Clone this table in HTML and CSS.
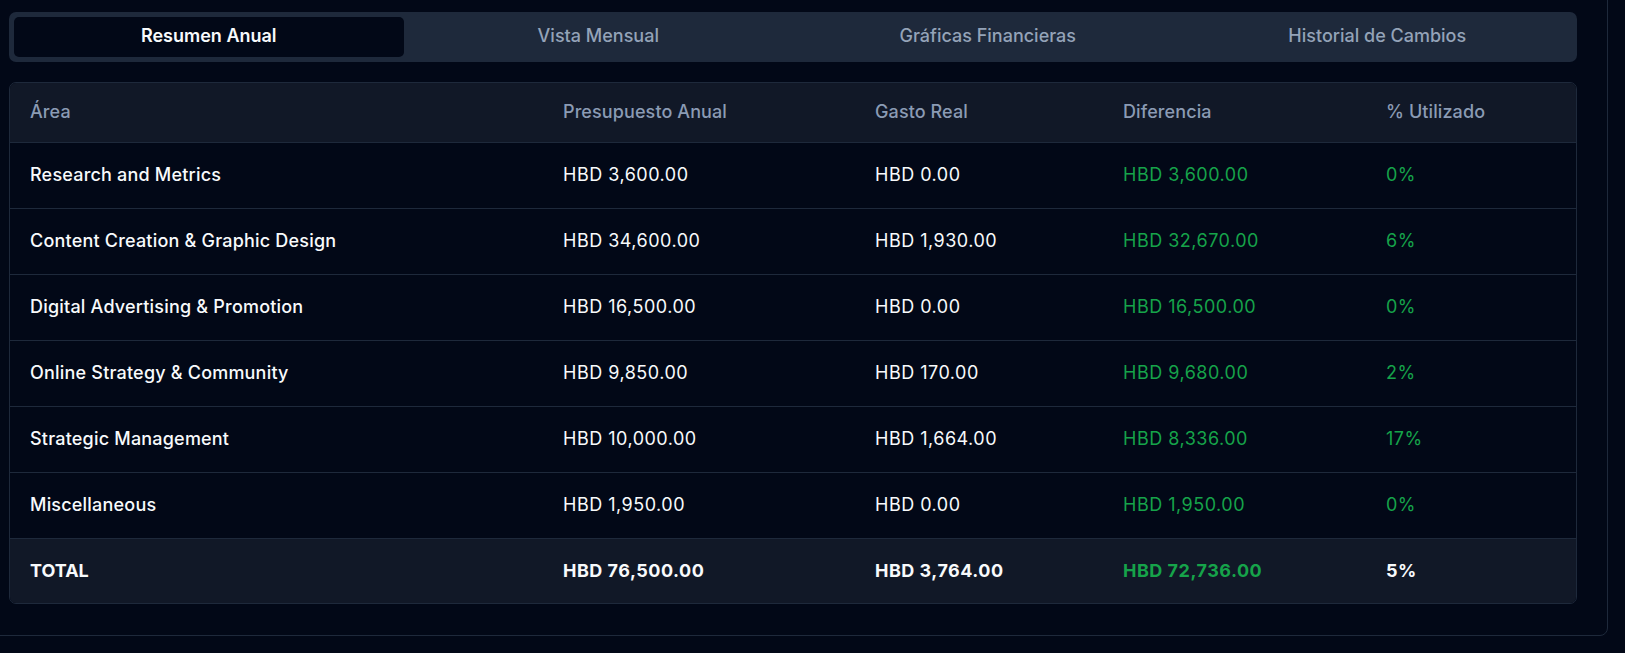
FILE: index.html
```html
<!DOCTYPE html>
<html lang="es">
<head>
<meta charset="utf-8">
<title>Resumen Anual</title>
<link rel="stylesheet" href="styles.css">
</head>
<body>
<div class="panel">
  <div class="tabs">
    <button class="tab active">Resumen Anual</button>
    <button class="tab">Vista Mensual</button>
    <button class="tab">Gráficas Financieras</button>
    <button class="tab">Historial de Cambios</button>
  </div>
  <div class="table-card">
    <table class="budget">
      <colgroup>
        <col class="c1"><col class="c2"><col class="c3"><col class="c4"><col class="c5">
      </colgroup>
      <thead>
        <tr><th>Área</th><th>Presupuesto Anual</th><th>Gasto Real</th><th>Diferencia</th><th>% Utilizado</th></tr>
      </thead>
      <tbody>
        <tr><td class="area">Research and Metrics</td><td class="num">HBD 3,600.00</td><td class="num">HBD 0.00</td><td class="num pos">HBD 3,600.00</td><td class="num pos">0%</td></tr>
        <tr><td class="area">Content Creation &amp; Graphic Design</td><td class="num">HBD 34,600.00</td><td class="num">HBD 1,930.00</td><td class="num pos">HBD 32,670.00</td><td class="num pos">6%</td></tr>
        <tr><td class="area">Digital Advertising &amp; Promotion</td><td class="num">HBD 16,500.00</td><td class="num">HBD 0.00</td><td class="num pos">HBD 16,500.00</td><td class="num pos">0%</td></tr>
        <tr><td class="area">Online Strategy &amp; Community</td><td class="num">HBD 9,850.00</td><td class="num">HBD 170.00</td><td class="num pos">HBD 9,680.00</td><td class="num pos">2%</td></tr>
        <tr><td class="area">Strategic Management</td><td class="num">HBD 10,000.00</td><td class="num">HBD 1,664.00</td><td class="num pos">HBD 8,336.00</td><td class="num pos">17%</td></tr>
        <tr><td class="area">Miscellaneous</td><td class="num">HBD 1,950.00</td><td class="num">HBD 0.00</td><td class="num pos">HBD 1,950.00</td><td class="num pos">0%</td></tr>
      </tbody>
      <tfoot>
        <tr><td>TOTAL</td><td class="num">HBD 76,500.00</td><td class="num">HBD 3,764.00</td><td class="num pos">HBD 72,736.00</td><td class="num">5%</td></tr>
      </tfoot>
    </table>
  </div>
</div>
</body>
</html>
```
FILE: styles.css
```css
* { box-sizing: border-box; }
html, body {
  margin: 0;
  padding: 0;
  background: #020817;
  overflow: hidden;
}
body {
  font-family: "Inter", "Noto Sans", sans-serif;
  color: #f8fafc;
  width: 1625px;
  height: 653px;
}
.panel {
  margin: -19px 0 0 -21px;
  width: 1629px;
  border: 1px solid #1e293b;
  border-radius: 8px;
  padding: 30px 30px 31px 29px;
  background: #020817;
}
.tabs {
  display: grid;
  grid-template-columns: repeat(4, 1fr);
  background: #1e293b;
  border-radius: 7px;
  padding: 5px;
  height: 50px;
}
.tab {
  border: 0;
  background: transparent;
  font-family: inherit;
  font-size: 18px;
  font-weight: 500;
  color: #94a3b8;
  border-radius: 5px;
  height: 40px;
  padding: 0 0 3px;
  cursor: pointer;
}
.tab.active {
  background: #020817;
  color: #f8fafc;
  font-weight: 600;
}
.table-card {
  margin-top: 20px;
  border: 1px solid #1e293b;
  border-radius: 7px;
  overflow: hidden;
}
.budget {
  width: 100%;
  border-collapse: collapse;
  table-layout: fixed;
  font-size: 18px;
}
.c1 { width: 533px; }
.c2 { width: 312px; }
.c3 { width: 248px; }
.c4 { width: 263px; }
.c5 { width: auto; }
.budget th, .budget td {
  text-align: left;
  padding: 0 20px 1px;
  white-space: nowrap;
}
.budget thead tr {
  background: #111827;
  height: 59px;
}
.budget th {
  font-weight: 500;
  color: #8b9bb4;
  letter-spacing: 0.1px;
}
.budget tbody tr {
  height: 66px;
  border-top: 1px solid #1e293b;
}
.budget td {
  color: #f8fafc;
  font-weight: 400;
}
.budget td.area {
  font-weight: 500;
  letter-spacing: 0.2px;
}
.budget td.num {
  letter-spacing: 0.5px;
}
.budget td.pos {
  color: #16a34a;
}
.budget tfoot tr {
  height: 65px;
  background: #111827;
  border-top: 1px solid #1e293b;
}
.budget tfoot td {
  font-weight: 700;
}
```
